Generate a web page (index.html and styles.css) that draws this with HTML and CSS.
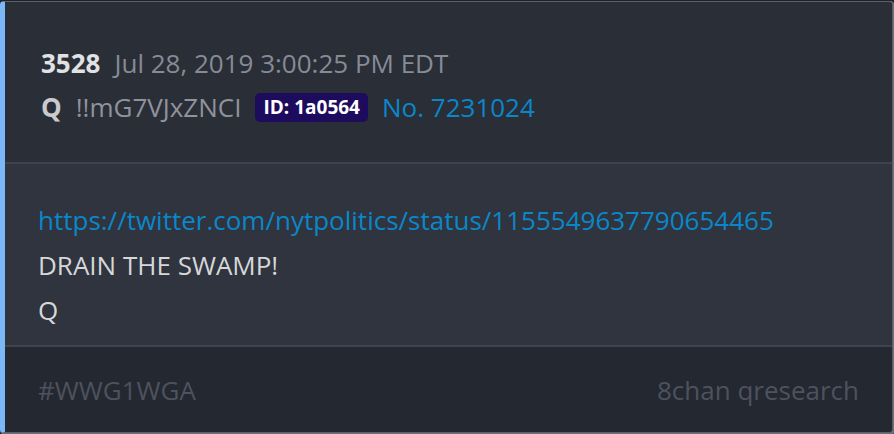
FILE: index.html
```html
<!DOCTYPE html>
<html lang="en">
<head>
    <meta charset="UTF-8">
    <link rel="stylesheet" href="styles.css">
    <title>Drop 3528</title>
</head>
<body>
    <div class="post">
        <div class="post-head">
            <div class="head-line">
                <span class="num">3528</span>
                <span class="date">Jul 28, 2019 3:00:25 PM EDT</span>
            </div>
            <div class="head-line">
                <span class="name">Q</span>
                <span class="trip">!!mG7VJxZNCI</span>
                <span class="uid">ID: 1a0564</span>
                <a class="postno" href="#">No. 7231024</a>
            </div>
        </div>
        <div class="post-body">
            <a class="link" href="#">https://twitter.com/nytpolitics/status/1155549637790654465</a>
            <p>DRAIN THE SWAMP!</p>
            <p>Q</p>
        </div>
        <div class="post-foot">
            <span>#WWG1WGA</span>
            <span>8chan qresearch</span>
        </div>
    </div>
</body>
</html>
```

FILE: styles.css
```css
html, body {
    margin: 0;
    height: 100%;
    background: #1f2229;
}

body {
    font-family: "Open Sans", "Noto Sans", sans-serif;
    padding: 1px 1px 1px 0;
    box-sizing: border-box;
}

.post {
    height: 100%;
    box-sizing: border-box;
    display: flex;
    flex-direction: column;
    border: 1px solid #5b606b;
    border-left: 5px solid #7ab8f7;
    border-radius: 4px;
    overflow: hidden;
    background: #2f343e;
    box-shadow: 1px 1px 0 1px #6b707a;
}

.post-head {
    background: #2a2e37;
    padding: 39px 36px 0 36px;
    height: 162px;
    flex: none;
    box-sizing: border-box;
    border-bottom: 2px solid #3e434e;
}

.head-line {
    display: flex;
    align-items: center;
    gap: 14px;
    height: 44px;
    font-size: 26px;
}

.num {
    font-weight: 700;
    color: #e1e2e4;
}

.date {
    color: #868b96;
}

.name {
    font-weight: 700;
    color: #c9cacd;
}

.trip {
    color: #8f939c;
}

.uid {
    background: #1d0b5d;
    color: #fff;
    font-weight: 700;
    font-size: 19px;
    line-height: 25px;
    padding: 2px 8px;
    border-radius: 5px;
}

.postno {
    color: #0b87c9;
    text-decoration: none;
}

.post-body {
    flex: 1;
    padding: 34px 33px 0 33px;
    font-size: 26px;
    color: #d6d7d9;
}

.post-body .link {
    display: block;
    color: #0b87c9;
    text-decoration: none;
    line-height: 45px;
}

.post-body p {
    margin: 0;
    line-height: 45px;
}

.post-foot {
    background: #242831;
    border-top: 2px solid #3e434e;
    height: 87px;
    flex: none;
    box-sizing: border-box;
    display: flex;
    justify-content: space-between;
    align-items: center;
    padding: 0 33px;
    font-size: 26px;
    color: #4d525e;
}
```
